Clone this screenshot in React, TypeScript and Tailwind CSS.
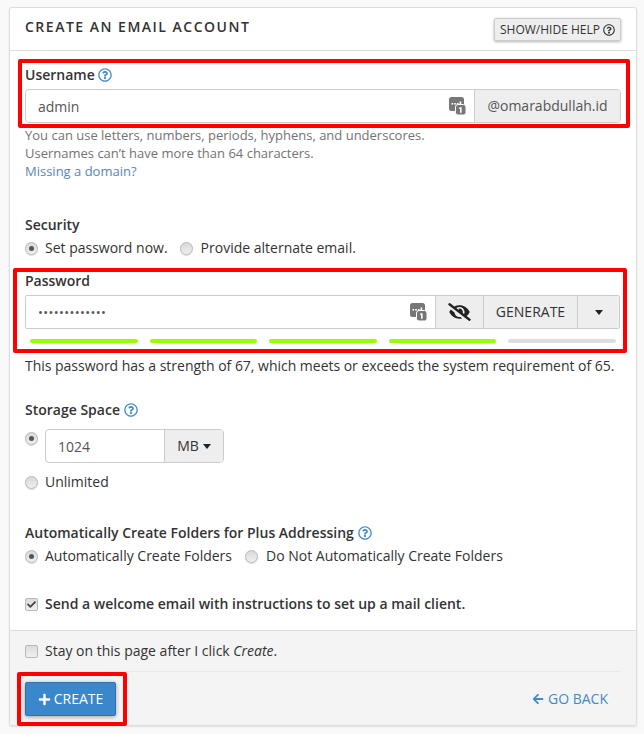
import { FaEyeSlash, FaRegQuestionCircle, FaPlus, FaArrowLeft, FaCheck } from "react-icons/fa";

function Radio({ on }: { on?: boolean }) {
  return (
    <span className="flex h-[13px] w-[13px] shrink-0 items-center justify-center rounded-full border border-[#b8b8b8] bg-gradient-to-b from-[#d8d8d8] to-[#f0f0f0] shadow-[0_1px_1px_rgba(0,0,0,0.15)]">
      {on && <span className="h-[5px] w-[5px] rounded-full bg-[#555]" />}
    </span>
  );
}

function Box({ on }: { on?: boolean }) {
  return (
    <span className="flex h-[13px] w-[13px] shrink-0 items-center justify-center rounded-[2px] border border-[#b8b8b8] bg-gradient-to-b from-[#dcdcdc] to-[#f0f0f0] text-[#444]">
      {on && <FaCheck className="h-[9px] w-[9px]" />}
    </span>
  );
}

function Help() {
  return <FaRegQuestionCircle className="h-[14px] w-[14px] text-[#428bca]" />;
}

function KeyIcon() {
  return (
    <svg width="17" height="18" viewBox="0 0 17 18" className="shrink-0">
      <rect x="0" y="0" width="15" height="14" rx="2.5" fill="#777" />
      <rect x="2.5" y="6" width="1.6" height="1.6" fill="#fff" />
      <rect x="5.2" y="6" width="1.6" height="1.6" fill="#fff" />
      <rect x="7.9" y="6" width="1.6" height="1.6" fill="#fff" />
      <rect x="10.6" y="4.5" width="1.6" height="3.1" fill="#fff" />
      <rect x="6.5" y="7.5" width="10.5" height="10.5" rx="2.5" fill="#777" stroke="#fff" strokeWidth="1" />
      <path d="M10.6 10.2h2v5.6h-1.6v-4h-1.2z" fill="#fff" />
    </svg>
  );
}

function Bar({ on }: { on?: boolean }) {
  return <div className={on ? "h-1 flex-1 rounded-full bg-[#99ff00]" : "h-1 flex-1 rounded-full bg-[#dddddd]"} />;
}

export default function App() {
  return (
    <div className="relative h-[734px] w-[644px] overflow-hidden bg-[#f9f9f9] pt-[7px] pl-[9px] font-['Open_Sans',sans-serif] text-[14px] leading-[18px] text-[#333]">
      <div className="h-[719px] w-[628px] overflow-hidden rounded-[3px] border border-[#dddddd] bg-white shadow-[0_1px_2px_rgba(0,0,0,0.1)]">
        <div className="flex h-[43px] items-start justify-between border-b border-[#dddddd] pr-[15px] pl-[15px]">
          <h1 className="mt-[9px] text-[14px] leading-[19px] font-semibold tracking-[1.5px] text-[#333]">CREATE AN EMAIL ACCOUNT</h1>
          <button className="mt-[10px] flex h-[23px] w-[127px] items-center justify-center gap-[3px] rounded-[2px] border border-[#cccccc] bg-[#eeeeee] text-[12px] text-[#333] shadow-[0_1px_3px_rgba(0,0,0,0.3)]">
            SHOW/HIDE HELP <FaRegQuestionCircle className="h-3 w-3" />
          </button>
        </div>

        <div className="h-[579px] pt-[15px] pr-[15px] pl-[15px]">
          <div className="flex h-[18px] items-center gap-[3px] font-semibold">
            Username <Help />
          </div>
          <div className="mt-[5px] flex h-[34px] w-[596px] overflow-hidden rounded-[4px] border border-[#cccccc]">
            <div className="flex flex-1 items-center justify-between pr-[8px] pl-3 text-[#555]">
              <span className="pt-[2px]">admin</span>
              <KeyIcon />
            </div>
            <div className="flex w-[146px] items-center justify-center border-l border-[#cccccc] bg-[#eeeeee] text-[#555]">@omarabdullah.id</div>
          </div>
          <p className="mt-[3px] text-[13px] leading-[18px] text-[#737373]">
            You can use letters, numbers, periods, hyphens, and underscores.
            <br />
            Usernames can’t have more than 64 characters.
            <br />
            <a className="text-[#5b85b5]">Missing a domain?</a>
          </p>

          <div className="mt-[36px] h-[18px] font-semibold">Security</div>
          <div className="mt-[5px] flex h-[18px] items-center">
            <Radio on />
            <span className="ml-[7px]">Set password now.</span>
            <span className="ml-[12px]"><Radio /></span>
            <span className="ml-[8px]">Provide alternate email.</span>
          </div>

          <div className="mt-[15px] h-[18px] font-semibold">Password</div>
          <div className="mt-[5px] flex h-[34px] w-[595px] overflow-hidden rounded-[2px] border border-[#cccccc]">
            <div className="flex flex-1 items-center justify-between pr-[8px] pl-3 text-[#555]">
              <span className="text-[13px] tracking-[0.36px]">•••••••••••••</span>
              <KeyIcon />
            </div>
            <div className="flex w-[48px] items-center justify-center border-l border-[#cccccc] bg-[#eeeeee]"><FaEyeSlash className="h-[18px] w-[23px] text-[#222]" /></div>
            <div className="flex w-[94px] items-center justify-center border-l border-[#cccccc] bg-[#eeeeee] text-[#333]">GENERATE</div>
            <div className="flex w-[42px] items-center justify-center border-l border-[#cccccc] bg-[#eeeeee]">
              <span className="h-0 w-0 border-x-[4.5px] border-t-[5px] border-x-transparent border-t-[#222]" />
            </div>
          </div>
          <div className="mt-[10px] flex w-[591px] gap-3 pl-[5px]">
            <Bar on /><Bar on /><Bar on /><Bar on /><Bar />
          </div>
          <p className="mt-[14px] whitespace-nowrap tracking-[-0.02px] text-[#333]">This password has a strength of 67, which meets or exceeds the system requirement of 65.</p>

          <div className="mt-[26px] flex h-[18px] items-center gap-[4px] font-semibold">
            Storage Space <Help />
          </div>
          <div className="mt-[10px] flex items-start">
            <span className="mt-[3px]"><Radio on /></span>
            <div className="ml-[7px] flex h-[34px] w-[179px] overflow-hidden rounded-[4px] border border-[#cccccc]">
              <div className="flex flex-1 items-center pt-[2px] pl-[12px] text-[#555]">1024</div>
              <div className="flex w-[59px] items-center justify-center gap-1 border-l border-[#cccccc] bg-[#eeeeee] text-[#333]">
                MB <span className="h-0 w-0 border-x-[4.5px] border-t-[5px] border-x-transparent border-t-[#222]" />
              </div>
            </div>
          </div>
          <div className="mt-[10px] flex h-[18px] items-center gap-[7px]"><Radio /><span>Unlimited</span></div>

          <div className="mt-[33px] flex h-[18px] items-center gap-[4px] font-semibold">
            Automatically Create Folders for Plus Addressing <Help />
          </div>
          <div className="mt-[5px] flex h-[18px] items-center">
            <Radio on />
            <span className="ml-[7px]">Automatically Create Folders</span>
            <span className="ml-[13px]"><Radio /></span>
            <span className="ml-[8px]">Do Not Automatically Create Folders</span>
          </div>
          <div className="mt-[30px] flex h-[18px] items-center gap-[7px] font-semibold"><Box on /><span>Send a welcome email with instructions to set up a mail client.</span></div>
        </div>

        <div className="h-[95px] border-t border-[#dddddd] bg-[#f4f4f4] pr-[15px] pl-[15px]">
          <div className="flex h-[41px] items-center gap-[7px] border-b border-[#e8e8e8]">
            <Box />
            <span>Stay on this page after I click <em>Create</em>.</span>
          </div>
          <div className="mt-[10px] flex items-center justify-between pr-[13px]">
            <button className="flex h-[34px] w-[91px] items-center justify-center gap-[3px] rounded-[2px] border border-[#2e74b0] bg-[#3a87cc] text-white shadow-[0_1px_4px_rgba(0,0,0,0.35)]">
              <FaPlus className="h-[13px] w-[13px]" /> CREATE
            </button>
            <a className="flex items-center gap-1 text-[#428bca]"><FaArrowLeft className="h-3 w-3" /> GO BACK</a>
          </div>
        </div>
      </div>

      <div className="absolute top-[59px] left-[18px] h-[69px] w-[612px] rounded-[2px] border-4 border-[#ff0000]" />
      <div className="absolute top-[268px] left-[13px] h-[85px] w-[614px] rounded-[2px] border-4 border-[#ff0000]" />
      <div className="absolute top-[672px] left-[17px] h-[54px] w-[110px] rounded-[2px] border-4 border-[#ff0000]" />
    </div>
  );
}
